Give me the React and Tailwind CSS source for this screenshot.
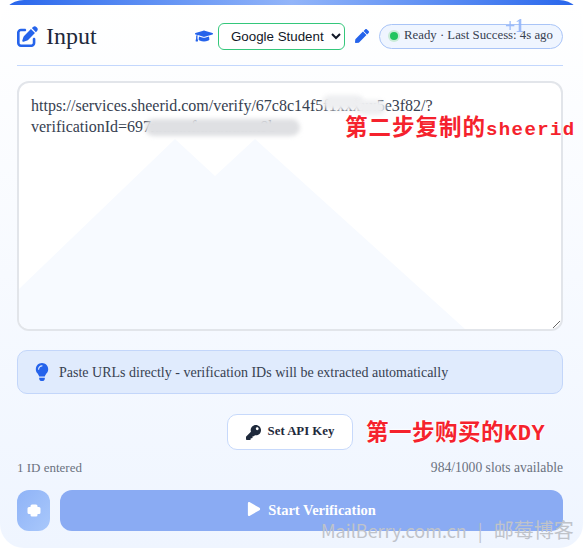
import React from "react";
import { FaGraduationCap, FaLightbulb, FaKey, FaPlay, FaPen } from "react-icons/fa";
import { FaPenToSquare } from "react-icons/fa6";

const serif = "font-['Liberation_Serif','DejaVu_Serif',serif]";
const note = "absolute font-['Noto_Sans_CJK_SC',sans-serif] font-bold text-[#f5222d] [text-shadow:0_0_2px_#fff,0_0_2px_#fff,0_0_3px_#fff] whitespace-nowrap leading-none";

export default function App() {
  return (
    <div className="w-[583px] h-[548px] bg-white overflow-hidden">
      <div className={`relative w-[583px] h-[548px] overflow-hidden rounded-[24px] bg-gradient-to-b from-white to-[#eff5ff] pl-[17px] pr-[20px] ${serif}`}>
        <div className="absolute left-0 top-0 h-[5px] w-full bg-gradient-to-r from-[#2563eb] via-[#93b5f9] to-[#2563eb]" />

        <header className="flex items-center justify-between h-[58px] pt-[7px] border-b border-[#c3d7fd] box-content -mb-px">
          <div className="flex items-center gap-[8px]">
            <FaPenToSquare className="text-[#2563eb] text-[21px]" />
            <h2 className="text-[24px] leading-none text-[#1e293b] font-['Liberation_Serif',serif]">Input</h2>
          </div>
          <div className="flex items-center">
            <FaGraduationCap className="text-[#2563eb] text-[18px] mr-[5px]" />
            <select defaultValue="Google Student" className="w-[127px] h-[27px] rounded-[6px] border border-[#34c77b] bg-white pl-[8px] text-[13.33px] text-[#111827] font-['Liberation_Sans',sans-serif]">
              <option>Google Student</option>
            </select>
            <FaPen className="text-[#2563eb] text-[14px] ml-[10px] mr-[10px]" />
            <div className="relative flex items-center h-[25px] w-[184px] rounded-full border border-[#a9c4f7] bg-[#eff5ff] pl-[10px] text-[12.8px] text-[#374151]">
              <span className="w-[8px] h-[8px] rounded-full bg-[#22c55e] shadow-[0_0_0_2px_#c9ecd8] mr-[6px]" />
              <span className="whitespace-nowrap">Ready · Last Success: 4s ago</span>
              <span className="absolute left-[125px] -top-[8px] text-[18px] font-bold text-[#93b5f9] opacity-90 leading-none">+1</span>
            </div>
          </div>
        </header>

        <div className="relative mt-[16px] h-[250px] rounded-[12px] border-2 border-[#e2e5ea] bg-white overflow-hidden">
          <svg className="absolute inset-0 w-full h-full" viewBox="0 0 542 246" preserveAspectRatio="none">
            <path d="M0 206 L156 56 L196 93 L236 56 L446 246 L0 246 Z" fill="#f7faff" />
          </svg>
          <textarea
            readOnly
            defaultValue={"https://services.sheerid.com/verify/67c8c14f5f1xxxxx5e3f82/?\nverificationId=697xxxxxfxxxxxxxx9b"}
            className="relative block w-full h-full bg-transparent px-[12px] py-[12px] text-[16px] leading-[21px] text-[#374151] outline-none resize-y"
          />
        </div>

        <div className="mt-[19px] h-[44px] flex items-center rounded-[10px] border border-[#c3d6fa] bg-[#e0ebfd] pl-[15px] text-[14px] text-[#374151]">
          <FaLightbulb className="text-[#2563eb] text-[18px] mr-[8px]" />
          <span>Paste URLs directly - verification IDs will be extracted automatically</span>
        </div>

        <div className="mt-[20px] flex justify-center">
          <button className="h-[36px] w-[126px] flex items-center justify-center gap-[7px] rounded-[10px] border border-[#c7d9fb] bg-white text-[12.8px] font-bold text-[#1e293b]">
            <FaKey className="text-[15px]" />
            Set API Key
          </button>
        </div>

        <div className="mt-[10px] flex justify-between text-[13px] leading-[16px] text-[#6b7280]">
          <span>1 ID entered</span>
          <span className="text-[13.6px]">984/1000 slots available</span>
        </div>

        <div className="mt-[14px] flex gap-[10px] h-[41px]">
          <button className="w-[33px] flex items-center justify-center rounded-[12px] bg-gradient-to-br from-[#8fb3f7] to-[#a9c8fb]">
            <svg width="14" height="13" viewBox="0 0 14 13">
              <path d="M5 0.5h4a1.5 1.5 0 0 1 1.5 1.5v1h1.5a1.5 1.5 0 0 1 1.5 1.5v4a1.5 1.5 0 0 1-1.5 1.5h-1.5v1a1.5 1.5 0 0 1-1.5 1.5h-4a1.5 1.5 0 0 1-1.5-1.5v-1h-1.5a1.5 1.5 0 0 1-1.5-1.5v-4a1.5 1.5 0 0 1 1.5-1.5h1.5v-1a1.5 1.5 0 0 1 1.5-1.5z" fill="#fff" />
            </svg>
          </button>
          <button className="flex-1 flex items-center justify-center gap-[7px] rounded-[12px] bg-[#8aabf3] text-white text-[14.5px] font-bold">
            <FaPlay className="text-[14px] -mt-[3px]" />
            <span>Start Verification</span>
          </button>
        </div>

        {/* redaction smears and overlaid annotations */}
        <div className="absolute left-[322px] top-[95px] w-[42px] h-[15px] rounded-full bg-[#eeeff1] blur-[2px]" />
        <div className="absolute left-[356px] top-[100px] w-[30px] h-[15px] rounded-full bg-[#eeeff1] blur-[2px]" />
        <div className="absolute left-[145px] top-[119px] w-[155px] h-[17px] rounded-full bg-[#dfe0e3] blur-[2px]" />
        <span className={`${note} left-[345px] top-[114px] text-[22.5px] tracking-[1px]`}>第二步复制的<span className="tracking-[1.4px] text-[19px] font-['Liberation_Mono',monospace]">sheerid</span></span>
        <span className={`${note} left-[366px] top-[419px] text-[22.5px] tracking-[0.5px]`}>第一步购买的<span className="text-[22px] font-['Liberation_Mono',monospace]">KDY</span></span>
        <span className="absolute left-[321px] top-[520px] text-[#bfc3ca] leading-none whitespace-nowrap font-['Noto_Sans_CJK_SC',sans-serif]">
          <span className="text-[18px]">MailBerry.com.cn</span>
          <span className="text-[18px] mx-[11px]">|</span>
          <span className="text-[20px]">邮莓博客</span>
        </span>
      </div>
    </div>
  );
}
